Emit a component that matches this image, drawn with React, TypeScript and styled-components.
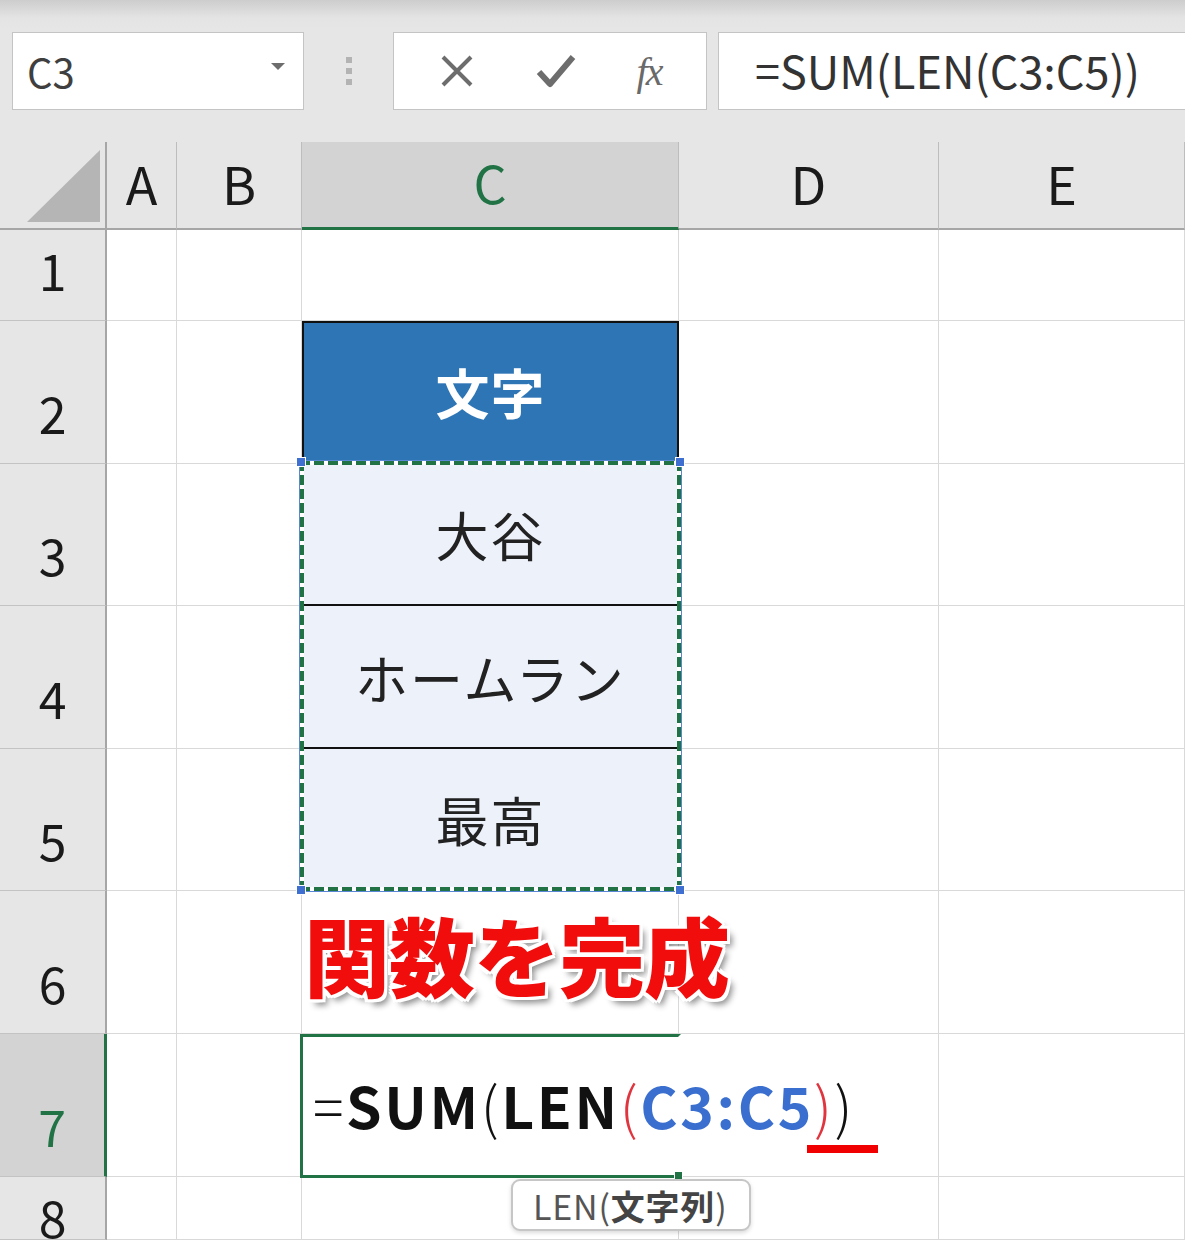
import React from 'react';
import styled, { createGlobalStyle, css } from 'styled-components';

const GlobalStyle = createGlobalStyle`
  html, body {
    margin: 0;
    padding: 0;
    background: #ffffff;
  }
  body {
    font-family: "Noto Sans CJK JP", "Noto Sans", sans-serif;
    width: 1185px;
    height: 1240px;
    overflow: hidden;
  }
`;

const GREEN = '#217346';
const COLS = [107, 70, 125, 377, 260, 246];
const ROW_HEIGHTS = [91, 143, 142, 143, 142, 143, 143, 63];

// ---------- formula bar ----------

const TopBar = styled.div`
  height: 142px;
  background: linear-gradient(#cdcdcd 0px, #e4e4e4 18px, #e6e6e6 30px);
  display: flex;
  align-items: flex-start;
  padding-top: 32px;
  box-sizing: border-box;
`;

const NameBox = styled.div`
  margin-left: 12px;
  width: 292px;
  height: 78px;
  box-sizing: border-box;
  background: #fff;
  border: 1px solid #c4c4c4;
  display: flex;
  align-items: center;
  justify-content: space-between;
  padding: 0 18px 0 14px;
  font-size: 40px;
  color: #3f3f3f;
`;

const Caret = styled.span`
  width: 0;
  height: 0;
  border-left: 7px solid transparent;
  border-right: 7px solid transparent;
  border-top: 7px solid #6d6d6d;
  margin-bottom: 10px;
`;

const Grip = styled.div`
  width: 89px;
  height: 78px;
  display: flex;
  flex-direction: column;
  align-items: center;
  justify-content: center;
  gap: 5px;
`;

const GripDot = styled.span`
  width: 6px;
  height: 6px;
  background: #b3b3b3;
`;

const ButtonBox = styled.div`
  width: 314px;
  height: 78px;
  box-sizing: border-box;
  background: #fff;
  border: 1px solid #c4c4c4;
  display: flex;
  align-items: center;
  justify-content: space-around;
  padding: 0 14px;
`;

const FxLabel = styled.span`
  font-family: "Liberation Serif", serif;
  font-style: italic;
  font-size: 40px;
  color: #6a6a6a;
  letter-spacing: -2px;
`;

const FormulaInput = styled.div`
  margin-left: 11px;
  flex: 1;
  height: 78px;
  box-sizing: border-box;
  background: #fff;
  border: 1px solid #c4c4c4;
  border-right: none;
  display: flex;
  align-items: center;
  padding-left: 36px;
  padding-bottom: 4px;
  font-size: 45px;
  color: #333;
`;

// ---------- sheet grid ----------

const Sheet = styled.div`
  display: grid;
  grid-template-columns: ${COLS.map((c) => `${c}px`).join(' ')};
  grid-template-rows: 88px ${ROW_HEIGHTS.map((r) => `${r}px`).join(' ')};
`;

const Corner = styled.div`
  background: #e6e6e6;
  border-right: 2px solid #a6a6a6;
  border-bottom: 2px solid #a6a6a6;
  box-sizing: border-box;
  display: flex;
  align-items: flex-end;
  justify-content: flex-end;
  padding: 0 5px 6px 0;
`;

const CornerTriangle = styled.div`
  width: 73px;
  height: 72px;
  background: #b5b5b5;
  clip-path: polygon(100% 0, 100% 100%, 0 100%);
`;

const ColHeader = styled.div<{ $active?: boolean }>`
  box-sizing: border-box;
  display: flex;
  align-items: center;
  justify-content: center;
  padding-bottom: 6px;
  font-size: 52px;
  color: #1a1a1a;
  background: #e6e6e6;
  border-right: 1px solid #bdbdbd;
  border-bottom: 2px solid #a6a6a6;
  ${({ $active }) =>
    $active &&
    css`
      background: #d3d3d3;
      color: ${GREEN};
      border-bottom: 3px solid ${GREEN};
    `}
`;

const RowHeader = styled.div<{ $active?: boolean; $cut?: boolean }>`
  box-sizing: border-box;
  display: flex;
  align-items: ${({ $cut }) => ($cut ? 'flex-start' : 'flex-end')};
  justify-content: center;
  padding-bottom: 26px;
  padding-top: ${({ $cut }) => ($cut ? '14px' : '0')};
  overflow: hidden;
  font-size: 50px;
  line-height: 1;
  color: #1a1a1a;
  background: #e6e6e6;
  border-right: 2px solid #a6a6a6;
  border-bottom: 1px solid #c3c3c3;
  ${({ $active }) =>
    $active &&
    css`
      background: #d3d3d3;
      color: ${GREEN};
      border-right: 3px solid ${GREEN};
    `}
`;

const Cell = styled.div`
  box-sizing: border-box;
  background: #fff;
  border-right: 1px solid #d9d9d9;
  border-bottom: 1px solid #d9d9d9;
`;

const TitleCell = styled.div`
  box-sizing: border-box;
  background: #2e75b6;
  border: 2px solid #111;
  border-bottom: none;
  display: flex;
  align-items: center;
  justify-content: center;
  padding-bottom: 4px;
  font-size: 54px;
  font-weight: 700;
  color: #fff;
  letter-spacing: 1px;
`;

const DataCell = styled.div<{ $first?: boolean }>`
  box-sizing: border-box;
  position: relative;
  ${({ $first }) => $first && 'z-index: 4;'}
  background: #edf1f9;
  border-left: 2px solid #111;
  border-right: 2px solid #111;
  border-bottom: 2px solid #111;
  display: flex;
  align-items: center;
  justify-content: center;
  white-space: nowrap;
  font-size: 53px;
  letter-spacing: 2px;
  color: #222;
`;

const OverflowCell = styled(Cell)`
  position: relative;
  z-index: 2;
  display: flex;
  align-items: center;
  white-space: nowrap;
  overflow: visible;
`;

const Headline = styled.span`
  font-size: 86px;
  font-weight: 900;
  color: #f20d0d;
  letter-spacing: -1px;
  margin: 0 0 18px 2px;
  text-shadow:
    -3px -3px 0 #fff, 3px -3px 0 #fff, -3px 3px 0 #fff, 3px 3px 0 #fff,
    0 -3px 0 #fff, 0 3px 0 #fff, -3px 0 0 #fff, 3px 0 0 #fff,
    5px 6px 6px rgba(0, 0, 0, 0.45);
`;

// the editing cell: the formula text spills over into column D
const ActiveCell = styled.div`
  position: relative;
  z-index: 3;
  box-sizing: border-box;
  margin: 0 -2px -1px -2px;
  border: 3px solid ${GREEN};
  border-right-color: transparent;
  background: #fff;
  display: flex;
  align-items: center;
  white-space: nowrap;
  padding: 0 0 4px 10px;
  font-size: 57px;
  font-weight: 700;
  color: #111;
  letter-spacing: 2.6px;
`;

const FillHandle = styled.span`
  position: absolute;
  right: -5px;
  bottom: -5px;
  width: 7px;
  height: 7px;
  background: ${GREEN};
  border: 1px solid #fff;
`;

const Paren = styled.span<{ $red?: boolean }>`
  font-weight: 300;
  color: ${({ $red }) => ($red ? '#e0353f' : '#111')};
`;

const RefText = styled.span`
  color: #3a6fcf;
`;

const Eq = styled.span`
  font-weight: 300;
`;

const RedMark = styled.span`
  position: absolute;
  left: 504px;
  top: 108px;
  width: 71px;
  height: 8px;
  background: #f00000;
`;

const Tooltip = styled.div`
  position: absolute;
  left: 208px;
  top: calc(100% + 4px);
  height: 52px;
  box-sizing: border-box;
  padding: 0 22px 0 20px;
  display: flex;
  align-items: center;
  background: #fff;
  border: 2px solid #c6c6c6;
  border-radius: 9px;
  box-shadow: 0 2px 4px rgba(0, 0, 0, 0.15);
  font-size: 34px;
  font-weight: 400;
  color: #555;
  letter-spacing: 0.8px;
`;

const Strong = styled.b`
  font-weight: 700;
  color: #444;
`;

const dashH = `repeating-linear-gradient(90deg, ${GREEN} 0 10px, #fff 10px 14px)`;
const dashV = `repeating-linear-gradient(180deg, ${GREEN} 0 10px, #fff 10px 14px)`;

// selection "marching ants" around C3:C5, laid over the three cells
const Selection = styled.div`
  position: absolute;
  left: -4px;
  right: -4px;
  top: -3px;
  height: 430px;
  box-sizing: border-box;
  pointer-events: none;
  box-shadow: 0 0 0 1px #5a86d6;
  background:
    ${dashH} top left / 100% 4px no-repeat,
    ${dashH} bottom left / 100% 4px no-repeat,
    ${dashV} top left / 4px 100% no-repeat,
    ${dashV} top right / 4px 100% no-repeat;
`;

const Handle = styled.span<{ $x: 'left' | 'right'; $y: 'top' | 'bottom' }>`
  position: absolute;
  z-index: 1;
  width: 8px;
  height: 8px;
  background: #3e6fd1;
  border: 1px solid #fff;
  ${({ $x }) => `${$x}: -4px;`}
  ${({ $y }) => `${$y}: -4px;`}
`;

const XIcon = () => (
  <svg width="36" height="36" viewBox="0 0 36 36">
    <path d="M4 4 L32 32 M32 4 L4 32" stroke="#6d6d6d" strokeWidth="4" fill="none" />
  </svg>
);

const CheckIcon = () => (
  <svg width="40" height="36" viewBox="0 0 40 36">
    <path d="M3 19 L14 31 L37 4" stroke="#6d6d6d" strokeWidth="6" fill="none" strokeLinejoin="round" />
  </svg>
);

const App: React.FC = () => {
  const letters = ['A', 'B', 'C', 'D', 'E'];

  const renderRow = (row: number) => {
    const r = row + 1;
    const cells: React.ReactNode[] = [];
    cells.push(
      <RowHeader key={`h${r}`} $active={r === 7} $cut={r === 8}>
        {r}
      </RowHeader>
    );
    cells.push(<Cell key={`a${r}`} />);
    cells.push(<Cell key={`b${r}`} />);

    if (r === 2) {
      cells.push(<TitleCell key="c2">文字</TitleCell>);
    } else if (r === 3) {
      cells.push(
        <DataCell key="c3" $first>
          大谷
          <Selection>
            <Handle $x="left" $y="top" />
            <Handle $x="right" $y="top" />
            <Handle $x="left" $y="bottom" />
            <Handle $x="right" $y="bottom" />
          </Selection>
        </DataCell>
      );
    } else if (r === 4) {
      cells.push(<DataCell key="c4">ホームラン</DataCell>);
    } else if (r === 5) {
      cells.push(<DataCell key="c5">最高</DataCell>);
    } else if (r === 6) {
      cells.push(
        <OverflowCell key="c6">
          <Headline>関数を完成</Headline>
        </OverflowCell>
      );
    } else if (r === 7) {
      cells.push(
        <ActiveCell key="c7">
          <Eq>=</Eq>SUM<Paren>(</Paren>LEN<Paren $red>(</Paren>
          <RefText>C3:C5</RefText>
          <Paren $red>)</Paren>
          <Paren>)</Paren>
          <RedMark />
          <FillHandle />
          <Tooltip>
            LEN(<Strong>文字列</Strong>)
          </Tooltip>
        </ActiveCell>
      );
    } else {
      cells.push(<Cell key={`c${r}`} />);
    }

    cells.push(<Cell key={`d${r}`} />);
    cells.push(<Cell key={`e${r}`} />);
    return cells;
  };

  return (
    <>
      <GlobalStyle />
      <TopBar>
        <NameBox>
          C3
          <Caret />
        </NameBox>
        <Grip>
          <GripDot />
          <GripDot />
          <GripDot />
        </Grip>
        <ButtonBox>
          <XIcon />
          <CheckIcon />
          <FxLabel>fx</FxLabel>
        </ButtonBox>
        <FormulaInput>=SUM(LEN(C3:C5))</FormulaInput>
      </TopBar>
      <Sheet>
        <Corner>
          <CornerTriangle />
        </Corner>
        {letters.map((l) => (
          <ColHeader key={l} $active={l === 'C'}>
            {l}
          </ColHeader>
        ))}
        {ROW_HEIGHTS.map((_, i) => renderRow(i))}
      </Sheet>
    </>
  );
};

export default App;
